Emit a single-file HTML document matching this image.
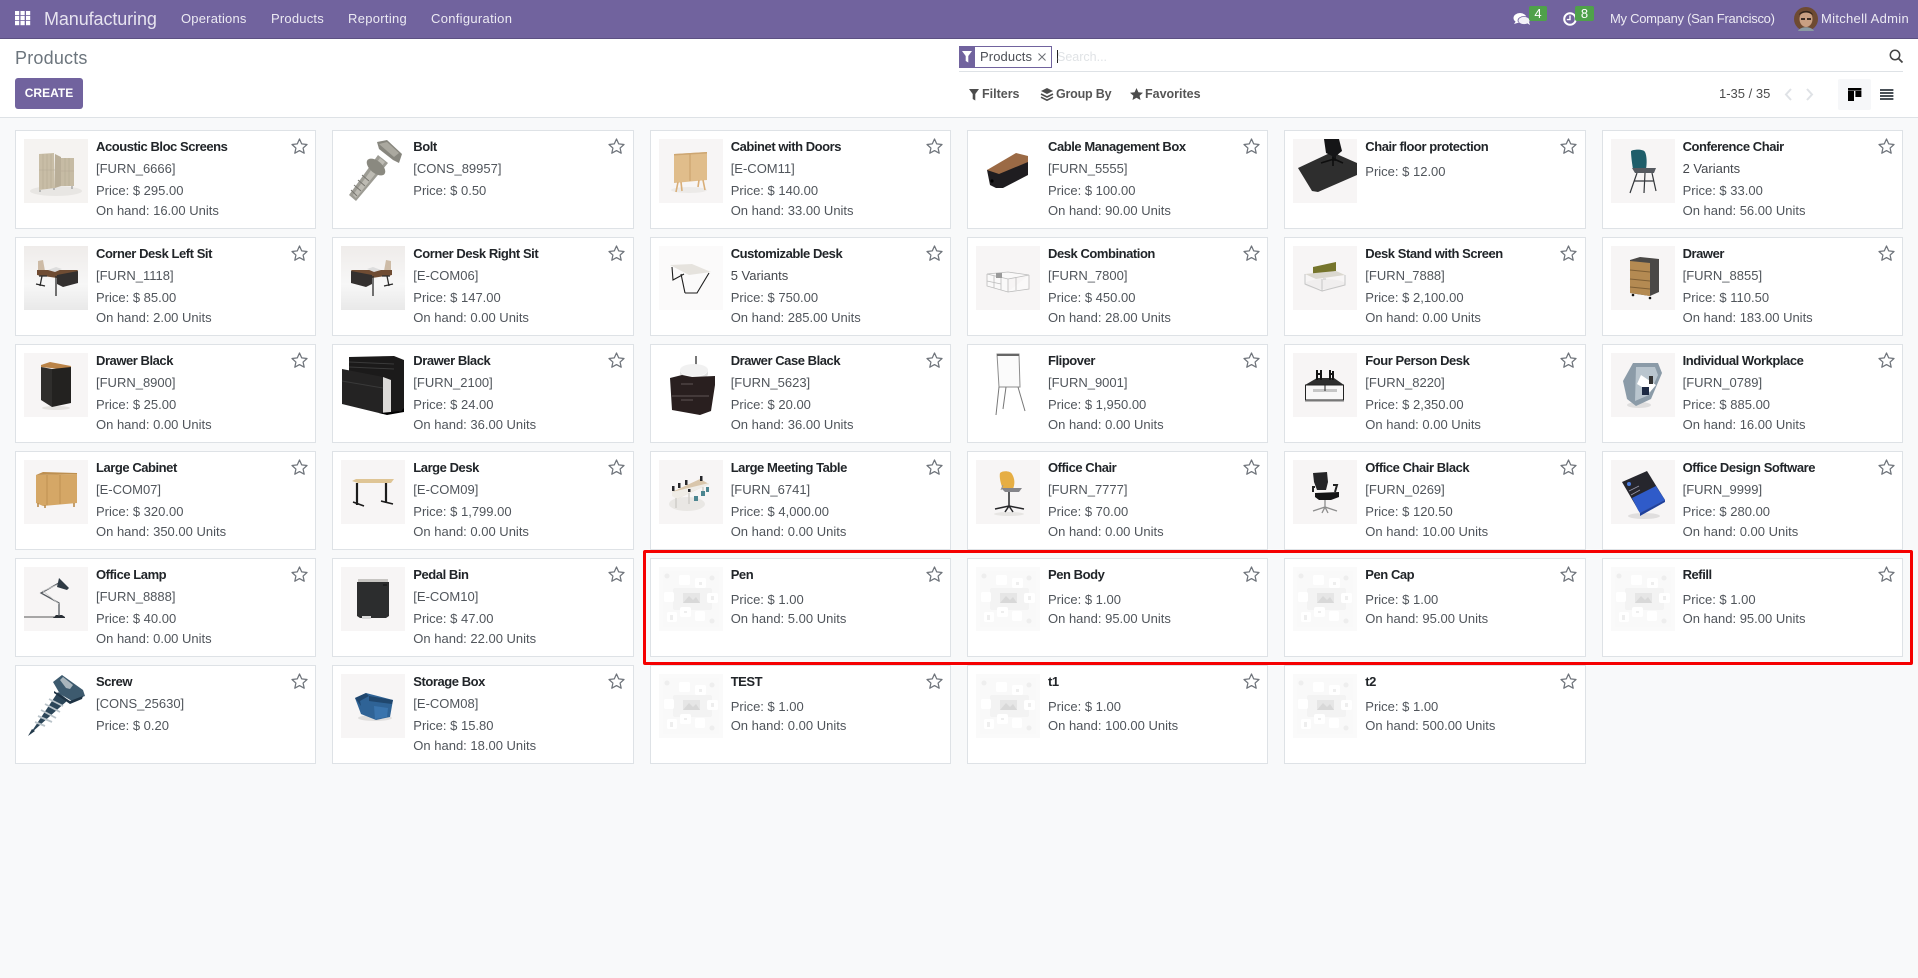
<!DOCTYPE html>
<html lang="en"><head><meta charset="utf-8"><title>Products</title>
<style>
*{box-sizing:border-box}
html,body{margin:0;padding:0;width:1918px;height:978px;overflow:hidden;background:#f8f9fa;font:13px/16px "Liberation Sans",sans-serif;color:#50555b}
.abs,.n,.c{position:absolute}
#nav{position:absolute;left:0;top:0;width:1918px;height:39px;background:#71639e;border-bottom:1px solid #5c5082}
.n{top:11px;color:#eceaf3;white-space:nowrap}
#cp{position:absolute;left:0;top:39px;width:1918px;height:79px;background:#fff;border-bottom:1px solid #dee2e6}
.tb{position:absolute;top:86px;color:#555;font-weight:bold;white-space:nowrap;font-size:12.5px}
.c{width:301.3px;height:99px;background:#fff;border:1px solid #dee2e6}
.x0{left:15px}.x1{left:332.3px}.x2{left:649.7px}.x3{left:967px}.x4{left:1284.3px}.x5{left:1601.6px}
.y0{top:130px}.y1{top:237px}.y2{top:344px}.y3{top:451px}.y4{top:558px}.y5{top:665px}
.c>svg.i{position:absolute;left:8px;top:8px;width:64px;height:64px}
.c>svg.s{position:absolute;left:275px;top:7px;width:17px;height:16px}
.c>b,.c>span{position:absolute;left:80px;white-space:nowrap}
.c>b{top:8px;color:#212529;letter-spacing:-.45px}
.l2{top:30px}.l3{top:52px}.l4{top:72px}.a{top:33px}.b{top:52px}
.v{color:#45484d}
</style></head><body>
<svg width="0" height="0" style="position:absolute"><defs>
<symbol id="st" viewBox="0 0 17 16"><polygon points="8.5,1 10.7,5.9 16,6.5 12.1,10.1 13.2,15.2 8.5,12.6 3.8,15.2 4.9,10.1 1,6.5 6.3,5.9" fill="none" stroke="#6f747b" stroke-width="1.25" stroke-linejoin="round"/></symbol>
<symbol id="ph" viewBox="0 0 64 64"><rect width="64" height="64" fill="#fafafa"/><rect x="4" y="4" width="56" height="56" fill="#f9f9f9"/><rect x="14" y="21" width="39" height="22" rx="2" fill="#f3f3f3"/><rect x="24" y="26" width="17" height="10" fill="#e6e6e6"/><path d="M24 36l6-7 4 4 3-3 4 6z" fill="#d8d8d8"/><g fill="#fff"><rect x="20" y="8" width="11" height="10" rx="2"/><rect x="36" y="11" width="11" height="10" rx="2"/><rect x="5" y="25" width="10" height="10" rx="2"/><rect x="48" y="26" width="11" height="10" rx="2"/><rect x="21" y="40" width="11" height="10" rx="2"/><rect x="8" y="45" width="10" height="10" rx="2"/><rect x="36" y="44" width="10" height="10" rx="2"/></g><g fill="#eeeeee"><circle cx="8" cy="9" r="2.5"/><circle cx="53" cy="11" r="2.5"/><circle cx="53" cy="54" r="2.5"/><rect x="40" y="15" width="3" height="3"/><rect x="52" y="29" width="3" height="4"/><rect x="25" y="44" width="3" height="2"/><rect x="11" y="48" width="3" height="5"/></g></symbol>
</defs></svg>

<div id="nav"></div>
<svg class="abs" style="left:15px;top:11px" width="16" height="15"><g fill="#fff"><rect width="4.2" height="4.2"/><rect x="5.5" width="4.2" height="4.2"/><rect x="11" width="4.2" height="4.2"/><rect y="5" width="4.2" height="4.2"/><rect x="5.5" y="5" width="4.2" height="4.2"/><rect x="11" y="5" width="4.2" height="4.2"/><rect y="10" width="4.2" height="4.2"/><rect x="5.5" y="10" width="4.2" height="4.2"/><rect x="11" y="10" width="4.2" height="4.2"/></g></svg>
<div class="n" style="left:44px;top:9px;font-size:18px;line-height:20px;color:#e6e3ef;letter-spacing:-.1px">Manufacturing</div>
<div class="n" style="left:181px;letter-spacing:.2px">Operations</div>
<div class="n" style="left:271px;letter-spacing:.2px">Products</div>
<div class="n" style="left:348px;letter-spacing:.3px">Reporting</div>
<div class="n" style="left:431px;letter-spacing:.3px">Configuration</div>
<svg class="abs" style="left:1513px;top:12px" width="18" height="14"><ellipse cx="7" cy="6" rx="6.5" ry="5" fill="#fff"/><ellipse cx="11" cy="8.5" rx="6" ry="4" fill="#f2f0f7" stroke="#71639e" stroke-width=".8"/><path d="M3 9l-2 3 5-1.5zM14 11l3 2-1-3z" fill="#fff"/></svg>
<div class="abs" style="left:1529px;top:6px;width:18px;height:15px;background:#4fa14a;border-radius:2px;color:#fff;text-align:center;font-size:13px;line-height:15px">4</div>
<svg class="abs" style="left:1562px;top:11px" width="16" height="15"><circle cx="8" cy="8" r="5.8" fill="none" stroke="#fff" stroke-width="2"/><path d="M8 4.5V8.6H4.8" fill="none" stroke="#fff" stroke-width="1.4"/></svg>
<div class="abs" style="left:1575px;top:6px;width:19px;height:15px;background:#4fa14a;border-radius:2px;color:#fff;text-align:center;font-size:13px;line-height:15px">8</div>
<div class="n" style="left:1610px;letter-spacing:-.28px">My Company (San Francisco)</div>
<svg class="abs" style="left:1794px;top:7px" width="24" height="24"><circle cx="12" cy="12" r="12" fill="#6e4a32"/><ellipse cx="12" cy="12" rx="6.5" ry="8" fill="#c99f83"/><path d="M5 8c1-5 12-6 14 0l-2-1c-3-2-7-2-10 0z" fill="#33241b"/><path d="M7 11h4v2H7zM13 11h4v2h-4z" fill="#3c2c24"/><path d="M4 24c2-5 14-5 16 0z" fill="#8b9aa3"/></svg>
<div class="n" style="left:1821px;letter-spacing:.3px">Mitchell Admin</div>

<div id="cp"></div>
<div class="abs" style="left:15px;top:48px;font-size:18px;line-height:20px;color:#6c757d;letter-spacing:.2px">Products</div>
<div class="abs" style="left:15px;top:78px;width:68px;height:31px;background:#71639e;border-radius:3px;color:#fff;font-weight:bold;font-size:12px;line-height:31px;text-align:center">CREATE</div>
<div class="abs" style="left:959px;top:46px;width:93px;height:22px;border:1px solid #71639e;background:#fff"></div>
<div class="abs" style="left:959px;top:46px;width:16px;height:22px;background:#71639e"></div>
<svg class="abs" style="left:962px;top:51px" width="11" height="12"><path d="M0 0h10L6.3 5v6.5L3.7 10V5z" fill="#fff"/></svg>
<div class="abs" style="left:980px;top:49px;color:#4c4f56;letter-spacing:.1px">Products</div>
<svg class="abs" style="left:1038px;top:53px" width="8" height="8"><path d="M.5.5l7 7M7.5.5l-7 7" stroke="#6c6f75" stroke-width="1"/></svg>
<div class="abs" style="left:1057px;top:50px;width:1px;height:13px;background:#222"></div>
<div class="abs" style="left:1057px;top:49px;color:#e0e3e6;font-size:12.5px">Search...</div>
<div class="abs" style="left:959px;top:71px;width:944px;height:1px;background:#dee2e6"></div>
<svg class="abs" style="left:1889px;top:49px" width="15" height="15"><circle cx="6" cy="6" r="4.7" fill="none" stroke="#444" stroke-width="1.5"/><path d="M9.5 9.5l4 4" stroke="#444" stroke-width="1.8"/></svg>
<svg class="abs" style="left:969px;top:89px" width="11" height="12"><path d="M0 0h10L6.3 5v6.5L3.7 10V5z" fill="#4c4c4c"/></svg>
<div class="tb" style="left:982px">Filters</div>
<svg class="abs" style="left:1040px;top:88px" width="14" height="13"><path d="M7 0l6 3-6 3-6-3z" fill="#4c4c4c"/><path d="M1 6l6 3 6-3M1 9.2l6 3 6-3" fill="none" stroke="#4c4c4c" stroke-width="1.6"/></svg>
<div class="tb" style="left:1056px;letter-spacing:-.2px">Group By</div>
<svg class="abs" style="left:1130px;top:88px" width="13" height="12"><polygon points="6.5,0 8.4,4.2 13,4.7 9.6,7.7 10.5,12 6.5,9.8 2.5,12 3.4,7.7 0,4.7 4.6,4.2" fill="#4c4c4c"/></svg>
<div class="tb" style="left:1145px">Favorites</div>
<div class="abs" style="left:1719px;top:86px;color:#4c4c4c">1-35 / 35</div>
<svg class="abs" style="left:1784px;top:88px" width="32" height="13"><path d="M7 1L2 6.5 7 12M23 1l5 5.500L23 12" fill="none" stroke="#dfe2e6" stroke-width="2"/></svg>
<div class="abs" style="left:1838px;top:79px;width:33px;height:31px;background:#f6f7f9;border-radius:2px"></div>
<svg class="abs" style="left:1848px;top:88px" width="14" height="14"><path d="M0 0h13.4v2.6H0zM0 3h6v10H0zM7.4 3h6v6h-6z" fill="#000"/></svg>
<svg class="abs" style="left:1880px;top:89px" width="14" height="12"><path d="M0 0h13.4v2H0zM0 3h13.4v2H0zM0 6h13.4v2H0zM0 9h13.4v2H0z" fill="#495057"/></svg>

<!-- ROW 0 -->
<div class="c x0 y0"><svg class="i" viewBox="0 0 64 64"><rect width="64" height="64" fill="#f5f3f1"/><ellipse cx="32" cy="52" rx="26" ry="5" fill="#e8e6e3"/><path d="M15 15l15-1 1 35-16 2z" fill="#c8bda6"/><path d="M31 15l6 3v29l-6 2z" fill="#b9ae98"/><path d="M37 19h13v28H37z" fill="#c6bba4"/><path d="M15 31h16M37 32h13M19 15v35M23 15v35M27 15v34M41 19v28M45 19v28" stroke="#b3a993" stroke-width=".6"/><path d="M16 51v2M30 49v2M48 47v3" stroke="#999" stroke-width="1.2"/></svg><svg class="s"><use href="#st"/></svg><b>Acoustic Bloc Screens</b><span class="l2">[FURN_6666]</span><span class="l3">Price: $ 295.00</span><span class="l4">On hand: 16.00 Units</span></div>
<div class="c x1 y0"><svg class="i" viewBox="0 0 64 64"><path d="M37 16l10 8-32 38-7-6z" fill="#9d9c94"/><path d="M39 19l5 4-29 36-3-3z" fill="#bdbbb3"/><ellipse cx="35" cy="28" rx="11" ry="6" transform="rotate(40 35 28)" fill="#8a8980"/><path d="M36 3l10-2 15 14-3 9-6-3-14-11z" fill="#87867e"/><path d="M38 5l8-2 12 11-5 4z" fill="#aaa89f"/><path d="M13 46l7 6M17 41l7 6M21 36l7 6M10 51l6 6" stroke="#77756f" stroke-width="1"/></svg><svg class="s"><use href="#st"/></svg><b>Bolt</b><span class="l2">[CONS_89957]</span><span class="l3">Price: $ 0.50</span></div>
<div class="c x2 y0"><svg class="i" viewBox="0 0 64 64"><rect width="64" height="64" fill="#f7f5f5"/><ellipse cx="30" cy="51" rx="18" ry="3" fill="#eceae8"/><path d="M15 15l33-2v28l-33 3z" fill="#e0bd8b"/><path d="M31 14v28" stroke="#c79e68"/><path d="M15 15l33-2v1.500l-33 2z" fill="#cda672"/><path d="M19 43l-2 10M44 41l2 10M22 43l1 9M40 41l-1 7" stroke="#d9ae78" stroke-width="1.600"/></svg><svg class="s"><use href="#st"/></svg><b>Cabinet with Doors</b><span class="l2">[E-COM11]</span><span class="l3">Price: $ 140.00</span><span class="l4">On hand: 33.00 Units</span></div>
<div class="c x3 y0"><svg class="i" viewBox="0 0 64 64"><path d="M11 31l3 15 6 3h7l25-13V17z" fill="#1f1d20"/><path d="M11 31L40 14l12 3v6L23 35z" fill="#9b6a45"/><circle cx="16" cy="42" r="1.600" fill="#000"/></svg><svg class="s"><use href="#st"/></svg><b>Cable Management Box</b><span class="l2">[FURN_5555]</span><span class="l3">Price: $ 100.00</span><span class="l4">On hand: 90.00 Units</span></div>
<div class="c x4 y0"><svg class="i" viewBox="0 0 64 64"><rect width="64" height="64" fill="#f7f5f5"/><path d="M5 29l34-16 25 11v12L25 53l-6-1z" fill="#2e2e2e"/><path d="M31 0h15l3 12-6 5v5h-4v-5l-6-3z" fill="#151517"/><path d="M28 24l13-4 9 4M40 18v9" stroke="#0e0e0e" stroke-width="1.600" fill="none"/></svg><svg class="s"><use href="#st"/></svg><b>Chair floor protection</b><span class="a">Price: $ 12.00</span></div>
<div class="c x5 y0"><svg class="i" viewBox="0 0 64 64"><rect width="64" height="64" fill="#f7f5f5"/><path d="M20 12c3-2 13-2 14 1 2 4 2 12 1 17H22c-1-6-2-13-2-18z" fill="#1f5e6a"/><path d="M21 29h24l-2 5H24z" fill="#565a60"/><path d="M26 34l-7 20M41 34l4 18M34 34l-1 20M23 42h20" stroke="#33363a" stroke-width="1.200"/></svg><svg class="s"><use href="#st"/></svg><b>Conference Chair</b><span class="l2 v">2 Variants</span><span class="l3">Price: $ 33.00</span><span class="l4">On hand: 56.00 Units</span></div>

<!-- ROW 1 -->
<div class="c x0 y1"><svg class="i" viewBox="0 0 64 64"><defs><linearGradient id="g1" x1="0" y1="0" x2="0" y2="1"><stop offset="0" stop-color="#efecea"/><stop offset=".6" stop-color="#f7f7f7"/><stop offset="1" stop-color="#e9e9e9"/></linearGradient></defs><rect width="64" height="64" fill="url(#g1)"/><path d="M14 15l5-1 2 11-7 5z" fill="#cdbba6"/><path d="M13 24h41l-3 5-18 3-20-3z" fill="#6f4c33"/><path d="M33 29l21-4v12l-15 4-6-3z" fill="#33302f"/><path d="M15 30h8M18 30l-2 10M12 38l9 2M32 30v20" stroke="#2b2b2b" stroke-width="1.300"/><path d="M24 24l8-3 6 2-7 3z" fill="#ddd"/></svg><svg class="s"><use href="#st"/></svg><b>Corner Desk Left Sit</b><span class="l2">[FURN_1118]</span><span class="l3">Price: $ 85.00</span><span class="l4">On hand: 2.00 Units</span></div>
<div class="c x1 y1"><svg class="i" viewBox="0 0 64 64"><defs><linearGradient id="g2" x1="0" y1="0" x2="0" y2="1"><stop offset="0" stop-color="#efecea"/><stop offset=".6" stop-color="#f7f7f7"/><stop offset="1" stop-color="#e9e9e9"/></linearGradient></defs><rect width="64" height="64" fill="url(#g2)"/><g transform="matrix(-1 0 0 1 64 0)"><path d="M14 15l5-1 2 11-7 5z" fill="#cdbba6"/><path d="M13 24h41l-3 5-18 3-20-3z" fill="#6f4c33"/><path d="M33 29l21-4v12l-15 4-6-3z" fill="#33302f"/><path d="M15 30h8M18 30l-2 10M12 38l9 2M32 30v20" stroke="#2b2b2b" stroke-width="1.300"/><path d="M24 24l8-3 6 2-7 3z" fill="#ddd"/></g></svg><svg class="s"><use href="#st"/></svg><b>Corner Desk Right Sit</b><span class="l2">[E-COM06]</span><span class="l3">Price: $ 147.00</span><span class="l4">On hand: 0.00 Units</span></div>
<div class="c x2 y1"><svg class="i" viewBox="0 0 64 64"><rect width="64" height="64" fill="#fbfafa"/><path d="M11 19l22-1 19 8-22 3z" fill="#e6e3de"/><path d="M13 21l1 13 11-6M26 47h12l12-20M22 28l4 19" fill="none" stroke="#1c1c1c" stroke-width="1.100"/></svg><svg class="s"><use href="#st"/></svg><b>Customizable Desk</b><span class="l2 v">5 Variants</span><span class="l3">Price: $ 750.00</span><span class="l4">On hand: 285.00 Units</span></div>
<div class="c x3 y1"><svg class="i" viewBox="0 0 64 64"><rect width="64" height="64" fill="#f7f5f5"/><path d="M11 28l21-2 21 3-21 4zM11 28v12l21 6V33M53 29v14l-21 3M18 30v12M25 31v13M11 35l14 3M40 32v12" fill="#fbfbfb" fill-opacity=".7" stroke="#bcbcbc" stroke-width=".8"/><rect x="20" y="27" width="6" height="5" fill="#9a9a9a"/></svg><svg class="s"><use href="#st"/></svg><b>Desk Combination</b><span class="l2">[FURN_7800]</span><span class="l3">Price: $ 450.00</span><span class="l4">On hand: 28.00 Units</span></div>
<div class="c x4 y1"><svg class="i" viewBox="0 0 64 64"><rect width="64" height="64" fill="#f7f5f5"/><ellipse cx="32" cy="38" rx="20" ry="5" fill="#f0eeee"/><path d="M20 21l23-5v9l-23 5z" fill="#76752c"/><path d="M12 28l31-3 9 4-29 4z" fill="#dbd8d0"/><path d="M12 28v10l17 7V33M52 29v10l-23 6M30 33h3" fill="none" stroke="#c6c6c6"/></svg><svg class="s"><use href="#st"/></svg><b>Desk Stand with Screen</b><span class="l2">[FURN_7888]</span><span class="l3">Price: $ 2,100.00</span><span class="l4">On hand: 0.00 Units</span></div>
<div class="c x5 y1"><svg class="i" viewBox="0 0 64 64"><rect width="64" height="64" fill="#f7f5f5"/><path d="M19 14l10-3 19 2v33l-9 4-20-3z" fill="#4a4846"/><path d="M19 15l20 2v33l-20-3z" fill="#b48a52"/><path d="M19 24l20 2M19 33l20 2M19 41l20 2" stroke="#7f5f35"/><circle cx="22" cy="49" r="1.300" fill="#111"/><circle cx="39" cy="52" r="1.300" fill="#111"/></svg><svg class="s"><use href="#st"/></svg><b>Drawer</b><span class="l2">[FURN_8855]</span><span class="l3">Price: $ 110.50</span><span class="l4">On hand: 183.00 Units</span></div>

<!-- ROW 2 -->
<div class="c x0 y2"><svg class="i" viewBox="0 0 64 64"><rect width="64" height="64" fill="#f7f5f5"/><ellipse cx="32" cy="55" rx="14" ry="2" fill="#e4e2df"/><path d="M17 12l9-3 21 4-1 4-19-2-10-1z" fill="#bb8448"/><path d="M17 14l11 2v38l-11-7z" fill="#2f2e2c"/><path d="M28 16l19-2v36l-19 4z" fill="#232220"/></svg><svg class="s"><use href="#st"/></svg><b>Drawer Black</b><span class="l2">[FURN_8900]</span><span class="l3">Price: $ 25.00</span><span class="l4">On hand: 0.00 Units</span></div>
<div class="c x1 y2"><svg class="i" viewBox="0 0 64 64"><path d="M8 4l45-1 10 4v50l-10 3-10-1V33L8 20z" fill="#1b1a1a"/><path d="M1 16l41 8v37L1 51z" fill="#242323"/><path d="M42 24l8 3v33l-8 1z" fill="#dcdad8"/><path d="M1 28l41 7M8 9l45 2M8 14l45 2" stroke="#3a3a3a"/><path d="M38 60l22-2 3-3v4l-17 3z" fill="#000"/></svg><svg class="s"><use href="#st"/></svg><b>Drawer Black</b><span class="l2">[FURN_2100]</span><span class="l3">Price: $ 24.00</span><span class="l4">On hand: 36.00 Units</span></div>
<div class="c x2 y2"><svg class="i" viewBox="0 0 64 64"><path d="M37 3v10" stroke="#777" stroke-width="2"/><ellipse cx="35" cy="17" rx="14" ry="6" fill="#f1f1f1"/><path d="M21 17c0 9 28 9 28 0v4c0 7-28 7-28 0z" fill="#dfdfdf"/><path d="M11 25l12-3 10 2 23-1v9l-4 26-11 4-28-5z" fill="#291f1f"/><path d="M13 43h37M22 31h12M22 47h12" stroke="#5f5656"/></svg><svg class="s"><use href="#st"/></svg><b>Drawer Case Black</b><span class="l2">[FURN_5623]</span><span class="l3">Price: $ 20.00</span><span class="l4">On hand: 36.00 Units</span></div>
<div class="c x3 y2"><svg class="i" viewBox="0 0 64 64"><path d="M21 1h22l1 33H23z" fill="#fbfbfb" stroke="#8d8d8d"/><path d="M23 34l-3 28M42 34l7 24M30 34l-3 22" stroke="#777" stroke-width="1"/><path d="M21 1h22v2H21z" fill="#666"/></svg><svg class="s"><use href="#st"/></svg><b>Flipover</b><span class="l2">[FURN_9001]</span><span class="l3">Price: $ 1,950.00</span><span class="l4">On hand: 0.00 Units</span></div>
<div class="c x4 y2"><svg class="i" viewBox="0 0 64 64"><rect width="64" height="64" fill="#f7f5f5"/><path d="M12 32l12-7h17l10 7z" fill="#2e2e2e"/><path d="M24 17v10M28 17v10M37 17v10M40 18v9M24 21h5M36 21h5" stroke="#151515" stroke-width="2"/><rect x="12.500" y="32" width="38" height="15" fill="#f8f7f7" stroke="#222"/><path d="M20 36h24v3H20z" fill="#c6c6c6"/><path d="M32 32v6" stroke="#222"/><path d="M12 47h39v1.500H12z" fill="#777"/></svg><svg class="s"><use href="#st"/></svg><b>Four Person Desk</b><span class="l2">[FURN_8220]</span><span class="l3">Price: $ 2,350.00</span><span class="l4">On hand: 0.00 Units</span></div>
<div class="c x5 y2"><svg class="i" viewBox="0 0 64 64"><rect width="64" height="64" fill="#f7f5f5"/><ellipse cx="28" cy="52" rx="12" ry="3" fill="#dfdede"/><path d="M22 10h25l4 10-11 26-15 7-9-7-4-18z" fill="#8b9ba8"/><path d="M25 14h19l3 8-9 20-14 6z" fill="#b9c5ce"/><path d="M30 22l15 10-6 7-13-8z" fill="#fff"/><path d="M38 23h4v8h-4z" fill="#333"/><path d="M31 34h7v8h-7z" fill="#1d2a44"/></svg><svg class="s"><use href="#st"/></svg><b>Individual Workplace</b><span class="l2">[FURN_0789]</span><span class="l3">Price: $ 885.00</span><span class="l4">On hand: 16.00 Units</span></div>

<!-- ROW 3 -->
<div class="c x0 y3"><svg class="i" viewBox="0 0 64 64"><rect width="64" height="64" fill="#f7f5f5"/><path d="M12 15l41-1v29l-34 3-7-3z" fill="#d5a766"/><path d="M12 15l41-1v-1l-34-1z" fill="#bd8f50"/><path d="M23 15v30M36 15v29" stroke="#bf9152"/><path d="M14 43v4M21 45v3M50 43v4" stroke="#ba8c4e" stroke-width="1.600"/></svg><svg class="s"><use href="#st"/></svg><b>Large Cabinet</b><span class="l2">[E-COM07]</span><span class="l3">Price: $ 320.00</span><span class="l4">On hand: 350.00 Units</span></div>
<div class="c x1 y3"><svg class="i" viewBox="0 0 64 64"><rect width="64" height="64" fill="#f7f5f5"/><path d="M11 21l4-2h38l-3 4H17z" fill="#dfc595"/><path d="M16 23v22M45 23v20" stroke="#1c1c1c" stroke-width="2.200"/><path d="M12 42l11 4M40 41l12 3" stroke="#1c1c1c" stroke-width="1.600"/></svg><svg class="s"><use href="#st"/></svg><b>Large Desk</b><span class="l2">[E-COM09]</span><span class="l3">Price: $ 1,799.00</span><span class="l4">On hand: 0.00 Units</span></div>
<div class="c x2 y3"><svg class="i" viewBox="0 0 64 64"><rect width="64" height="64" fill="#f7f5f5"/><ellipse cx="28" cy="44" rx="18" ry="7" fill="#e9e7e4"/><path d="M13 32l28-13 9 5-32 15z" fill="#d9c6ab"/><path d="M13 32v4l5 3v-0l32-15v-1z" fill="#efece6"/><path d="M17 38v10M30 33v11M44 27v8" stroke="#d2d0cb" stroke-width="1.600"/><g fill="#26262a"><rect x="13" y="26" width="2.500" height="5"/><rect x="19" y="23" width="2.500" height="5"/><rect x="26" y="20" width="2.500" height="5"/><rect x="41" y="16" width="2.500" height="5"/><rect x="29" y="29" width="2.500" height="3"/></g><g fill="#4c8691"><rect x="35" y="36" width="4" height="5"/><rect x="42" y="31" width="4" height="5"/><rect x="47" y="27" width="3" height="5"/></g></svg><svg class="s"><use href="#st"/></svg><b>Large Meeting Table</b><span class="l2">[FURN_6741]</span><span class="l3">Price: $ 4,000.00</span><span class="l4">On hand: 0.00 Units</span></div>
<div class="c x3 y3"><svg class="i" viewBox="0 0 64 64"><rect width="64" height="64" fill="#f7f5f5"/><ellipse cx="33" cy="54" rx="15" ry="2" fill="#e7e5e3"/><path d="M24 13c3-3 11-2 12 1 3 5 3 10 1 15H27c-2-4-4-12-3-16z" fill="#e6ae44"/><path d="M25 28h21l-3 4H29z" fill="#85858a"/><path d="M33 32v14M33 46l-14 3M33 46l15 3M33 46l-4 6M33 46l4 6" stroke="#27272a" stroke-width="1.500"/><path d="M27 25l-2 5" stroke="#999"/></svg><svg class="s"><use href="#st"/></svg><b>Office Chair</b><span class="l2">[FURN_7777]</span><span class="l3">Price: $ 70.00</span><span class="l4">On hand: 0.00 Units</span></div>
<div class="c x4 y3"><svg class="i" viewBox="0 0 64 64"><rect width="64" height="64" fill="#f7f5f5"/><path d="M20 13l14-1 1 10-2 8H24l-3-8z" fill="#252527"/><path d="M22 33l24-1v5l-8 3H26l-4-3z" fill="#141415"/><path d="M22 27h-2v5M40 25h4l-2 7" fill="none" stroke="#222" stroke-width="2"/><path d="M32 40v7M32 47l-12 4M32 47l12 4M32 47l-3 6M32 47l3 6" stroke="#8d8d8d" stroke-width="1.300"/></svg><svg class="s"><use href="#st"/></svg><b>Office Chair Black</b><span class="l2">[FURN_0269]</span><span class="l3">Price: $ 120.50</span><span class="l4">On hand: 10.00 Units</span></div>
<div class="c x5 y3"><svg class="i" viewBox="0 0 64 64"><rect width="64" height="64" fill="#f7f5f5"/><ellipse cx="33" cy="56" rx="16" ry="3" fill="#e0dede"/><path d="M11 22l25-11 18 29-25 13z" fill="#26262d"/><path d="M21 38l24-12 9 14-25 13-2-3z" fill="#2f5bc9"/><path d="M29 53v3l25-14v-2z" fill="#1f409b"/><circle cx="18" cy="24" r="2" fill="#4c7de0"/><path d="M18 31l10-5M20 35l9-5" stroke="#99a" stroke-width=".8"/></svg><svg class="s"><use href="#st"/></svg><b>Office Design Software</b><span class="l2">[FURN_9999]</span><span class="l3">Price: $ 280.00</span><span class="l4">On hand: 0.00 Units</span></div>

<!-- ROW 4 -->
<div class="c x0 y4"><svg class="i" viewBox="0 0 64 64"><rect width="64" height="64" fill="#f7f5f5"/><path d="M0 50h30" stroke="#222" stroke-width=".8"/><path d="M29 51h12v-1l-3-2h-6z" fill="#2a2f36"/><path d="M35 49V36L17 26l18-10" fill="none" stroke="#555a60" stroke-width="1.300"/><path d="M35 37l-16-13 16-7" fill="none" stroke="#c9c9c9" stroke-width=".8"/><path d="M35 11l10 10-2 2-10-3z" fill="#2f3a44"/></svg><svg class="s"><use href="#st"/></svg><b>Office Lamp</b><span class="l2">[FURN_8888]</span><span class="l3">Price: $ 40.00</span><span class="l4">On hand: 0.00 Units</span></div>
<div class="c x1 y4"><svg class="i" viewBox="0 0 64 64"><rect width="64" height="64" fill="#f7f5f5"/><path d="M17 12h30v3H17z" fill="#c7c5c2"/><path d="M16 15h32v34l-3 2H19l-3-2z" fill="#2c2d2e"/><path d="M42 18h4" stroke="#111"/><path d="M21 49h9v3h-9z" fill="#d8d8d8"/></svg><svg class="s"><use href="#st"/></svg><b>Pedal Bin</b><span class="l2">[E-COM10]</span><span class="l3">Price: $ 47.00</span><span class="l4">On hand: 22.00 Units</span></div>
<div class="c x2 y4"><svg class="i"><use href="#ph"/></svg><svg class="s"><use href="#st"/></svg><b>Pen</b><span class="a">Price: $ 1.00</span><span class="b">On hand: 5.00 Units</span></div>
<div class="c x3 y4"><svg class="i"><use href="#ph"/></svg><svg class="s"><use href="#st"/></svg><b>Pen Body</b><span class="a">Price: $ 1.00</span><span class="b">On hand: 95.00 Units</span></div>
<div class="c x4 y4"><svg class="i"><use href="#ph"/></svg><svg class="s"><use href="#st"/></svg><b>Pen Cap</b><span class="a">Price: $ 1.00</span><span class="b">On hand: 95.00 Units</span></div>
<div class="c x5 y4"><svg class="i"><use href="#ph"/></svg><svg class="s"><use href="#st"/></svg><b>Refill</b><span class="a">Price: $ 1.00</span><span class="b">On hand: 95.00 Units</span></div>

<!-- ROW 5 -->
<div class="c x0 y5"><svg class="i" viewBox="0 0 64 64"><path d="M6 60L34 18l10 8z" fill="#2c4659"/><path d="M14 42l14 6M17 36l15 8M21 30l15 8M25 25l14 7M11 48l10 4" stroke="#b9c3c9" stroke-width="1.800"/><path d="M4 62l4-7 3 2z" fill="#22394a"/><path d="M29 8l9-7 21 15 2 6-13 5-12-7z" fill="#3d5a6e"/><path d="M36 6l3-3 10 8-3 4-4-1z" fill="#a9b5bc"/><path d="M30 17l16 10 13-5-1 3-12 5-16-11z" fill="#1e3344"/></svg><svg class="s"><use href="#st"/></svg><b>Screw</b><span class="l2">[CONS_25630]</span><span class="l3">Price: $ 0.20</span></div>
<div class="c x1 y5"><svg class="i" viewBox="0 0 64 64"><rect width="64" height="64" fill="#f7f5f5"/><ellipse cx="34" cy="44" rx="17" ry="3" fill="#e0dedd"/><path d="M14 24l11-5 27 7-3 17-14 3-15-6z" fill="#2f6396"/><path d="M14 24l11-5 3 3-9 5 1 5zM28 22l24 4-1 4-23-3z" fill="#20476e"/><path d="M33 32l14 2-1 9-12 2z" fill="#3a74ad"/></svg><svg class="s"><use href="#st"/></svg><b>Storage Box</b><span class="l2">[E-COM08]</span><span class="l3">Price: $ 15.80</span><span class="l4">On hand: 18.00 Units</span></div>
<div class="c x2 y5"><svg class="i"><use href="#ph"/></svg><svg class="s"><use href="#st"/></svg><b>TEST</b><span class="a">Price: $ 1.00</span><span class="b">On hand: 0.00 Units</span></div>
<div class="c x3 y5"><svg class="i"><use href="#ph"/></svg><svg class="s"><use href="#st"/></svg><b>t1</b><span class="a">Price: $ 1.00</span><span class="b">On hand: 100.00 Units</span></div>
<div class="c x4 y5"><svg class="i"><use href="#ph"/></svg><svg class="s"><use href="#st"/></svg><b>t2</b><span class="a">Price: $ 1.00</span><span class="b">On hand: 500.00 Units</span></div>

<div class="abs" style="left:643px;top:550px;width:1270px;height:115px;border:3px solid #f50000;border-radius:2px"></div>
</body></html>
